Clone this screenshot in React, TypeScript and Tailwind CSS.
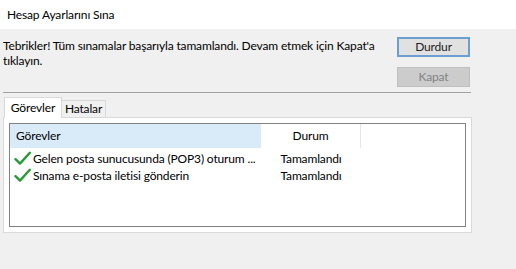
import React from 'react'

const font = { fontFamily: 'Lato, "Noto Sans", sans-serif' }

function Check() {
  return (
    <svg width="17" height="15" viewBox="0 0 17 15" className="shrink-0">
      <path d="M1.5 8.2 L6 12.6 L15.8 1.8" fill="none" stroke="#2a9a37" strokeWidth="2.4" strokeLinecap="round" strokeLinejoin="round" />
    </svg>
  )
}

const rows = [
  { task: 'Gelen posta sunucusunda (POP3) oturum ...', status: 'Tamamlandı' },
  { task: 'Sınama e-posta iletisi gönderin', status: 'Tamamlandı' },
]

export default function App() {
  return (
    <div className="w-[516px] h-[269px] bg-[#f0f0f0] text-[12px] tracking-[-0.15px] text-black flex flex-col overflow-hidden" style={font}>
      {/* title */}
      <div className="h-[29px] bg-white flex items-center pl-[7px] shrink-0">Hesap Ayarlarını Sına</div>

      {/* message + buttons */}
      <div className="h-[63px] flex shrink-0">
        <div className="w-[397px] pl-[3px] pt-[9px] leading-[15px]">
          Tebrikler! Tüm sınamalar başarıyla tamamlandı. Devam etmek için Kapat'a tıklayın.
        </div>
        <div className="pt-[8px] flex flex-col gap-[10px]">
          <button className="w-[73px] h-[20px] bg-[#e1e1e1] border-2 border-[#6a9fd2] text-[#222] leading-none">Durdur</button>
          <button className="w-[73px] h-[20px] bg-[#cccccc] border border-[#bfbfbf] text-[#838383] leading-none">Kapat</button>
        </div>
      </div>

      <div className="ml-[3px] w-[468px] h-px bg-[#a0a0a0] shrink-0" />

      {/* tabs */}
      <div className="mt-[5px] ml-[4px] h-[20px] flex items-end relative z-10 -mb-px shrink-0">
        <div className="w-[58px] h-[21px] bg-white border border-b-0 border-[#d9d9d9] flex items-center justify-center">Görevler</div>
        <div className="w-[44px] h-[18px] border border-l-0 border-[#d9d9d9] flex items-center justify-center">Hatalar</div>
      </div>

      {/* panel */}
      <div className="ml-[3px] w-[469px] h-[116px] bg-white border border-[#d9d9d9] p-[5px] shrink-0">
        <div className="h-full border border-[#828282] flex flex-col">
          <div className="h-[24px] flex">
            <div className="w-[251px] bg-[#d9ebf9] flex items-center pl-[6px]">Görevler</div>
            <div className="w-[100px] border-r border-[#e5e5e5] flex items-center justify-center">Durum</div>
          </div>
          <div className="mt-[2px] flex flex-col">
            {rows.map((r) => (
              <div key={r.task} className="h-[17px] flex items-center">
                <div className="w-[251px] flex items-center pl-[4px] gap-[2px] whitespace-nowrap">
                  <Check />
                  <span>{r.task}</span>
                </div>
                <div className="w-[100px] text-center">{r.status}</div>
              </div>
            ))}
          </div>
        </div>
      </div>
    </div>
  )
}
